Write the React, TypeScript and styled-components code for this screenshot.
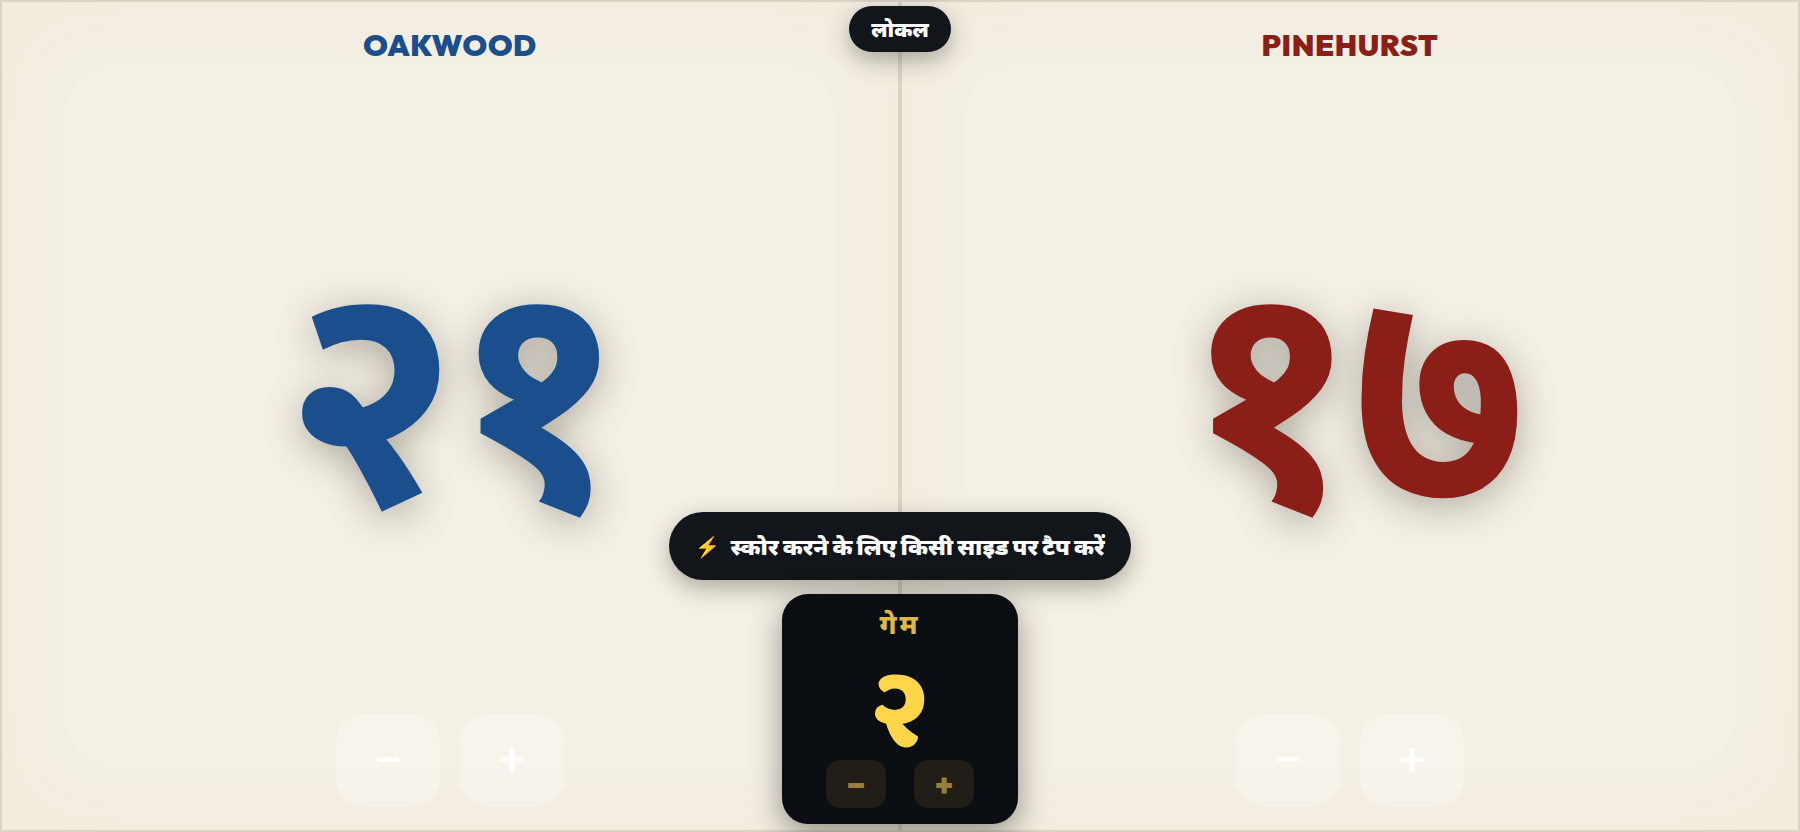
import React from "react";
import styled, { createGlobalStyle } from "styled-components";

const GlobalStyle = createGlobalStyle`
  *, *::before, *::after { box-sizing: border-box; }
  body {
    margin: 0;
    background: #f5f0e4;
    font-family: Outfit, system-ui, "Noto Sans Devanagari", "Noto Sans", sans-serif;
  }
`;

const Board = styled.main`
  position: relative;
  display: grid;
  grid-template-columns: 1fr 1fr;
  min-height: 100vh;
  overflow: hidden;
`;

const Side = styled.section<{ $color: string }>`
  display: grid;
  grid-template-rows: 116px 1fr 116px;
  justify-items: center;
  border: 2px solid #dad4c7;
  background: #f5f0e4;
  box-shadow: inset 0 0 100px rgba(139, 69, 19, 0.04);
  color: ${(p) => p.$color};
`;

const TeamName = styled.h2`
  margin: 0;
  padding-top: 23px;
  font-size: 30px;
  line-height: 40px;
  font-weight: 900;
  letter-spacing: 0.02em;
`;

const Score = styled.div`
  align-self: center;
  padding-bottom: 58px;
  font-size: 316px;
  line-height: 316px;
  font-weight: 700;
  letter-spacing: -0.03em;
  text-shadow: 0 8px 40px rgba(0, 0, 0, 0.3);
`;

const Controls = styled.div<{ $gap: number }>`
  display: flex;
  gap: ${(p) => p.$gap}px;
`;

const StepButton = styled.button`
  width: 104px;
  height: 93px;
  padding: 0;
  border: 0;
  border-radius: 28px;
  background: rgba(255, 255, 255, 0.25);
  color: #fff;
  font: 600 50px/93px "Baloo 2", Outfit, sans-serif;
  cursor: pointer;
`;

const GameButton = styled.button`
  width: 60px;
  height: 48px;
  padding: 0;
  border: 0;
  border-radius: 14px;
  background: rgba(255, 213, 74, 0.09);
  color: #97803a;
  font: 900 32px/48px Outfit, sans-serif;
  cursor: pointer;
`;

const Pill = styled.div<{ $large?: boolean }>`
  display: flex;
  align-items: center;
  justify-content: center;
  gap: 10px;
  height: ${(p) => (p.$large ? 68 : 46)}px;
  padding: 0 ${(p) => (p.$large ? 26 : 22)}px;
  border-radius: 34px;
  background: #12161b;
  color: #fff;
  font-size: ${(p) => (p.$large ? 23 : 21)}px;
  font-weight: 900;
  white-space: nowrap;
  box-shadow: 0 8px 24px rgba(0, 0, 0, 0.3);
`;

const Overlay = styled.div<{ $edge: "top" | "bottom" }>`
  position: absolute;
  ${(p) => (p.$edge === "top" ? "top: 6px;" : "bottom: 8px;")}
  left: 0;
  right: 0;
  display: flex;
  flex-direction: column;
  align-items: center;
  gap: 14px;
  pointer-events: none;
`;

const Bolt = styled.span`
  font-size: 20px;
`;

const GameCard = styled.section`
  display: flex;
  flex-direction: column;
  align-items: center;
  width: 236px;
  padding: 12px 0 16px;
  border-radius: 26px;
  background: #0a0d11;
  color: #ffd54a;
  box-shadow: 0 10px 32px rgba(0, 0, 0, 0.4);
  pointer-events: auto;
`;

const GameLabel = styled.h3`
  margin: 0;
  color: #dcb844;
  font-size: 27px;
  line-height: 36px;
  font-weight: 800;
  letter-spacing: 3px;
`;

const GameNumber = styled.div`
  margin-top: 28px;
  font: 800 109px/90px "Baloo 2", Outfit, sans-serif;
`;

const TEAMS = [
  { name: "OAKWOOD", score: "२१", color: "#1a4e8c" },
  { name: "PINEHURST", score: "१७", color: "#8c1e18" },
];

export default function App() {
  return (
    <>
      <GlobalStyle />
      <Board>
        {TEAMS.map((team) => (
          <Side key={team.name} $color={team.color}>
            <TeamName>{team.name}</TeamName>
            <Score>{team.score}</Score>
            <Controls $gap={20}>
              <StepButton type="button">−</StepButton>
              <StepButton type="button">+</StepButton>
            </Controls>
          </Side>
        ))}
        <Overlay $edge="top">
          <Pill>लोकल</Pill>
        </Overlay>
        <Overlay $edge="bottom">
          <Pill $large>
            <Bolt>⚡</Bolt>
            <span>स्कोर करने के लिए किसी साइड पर टैप करें</span>
          </Pill>
          <GameCard>
            <GameLabel>गेम</GameLabel>
            <GameNumber>२</GameNumber>
            <Controls $gap={28}>
              <GameButton type="button">−</GameButton>
              <GameButton type="button">+</GameButton>
            </Controls>
          </GameCard>
        </Overlay>
      </Board>
    </>
  );
}
